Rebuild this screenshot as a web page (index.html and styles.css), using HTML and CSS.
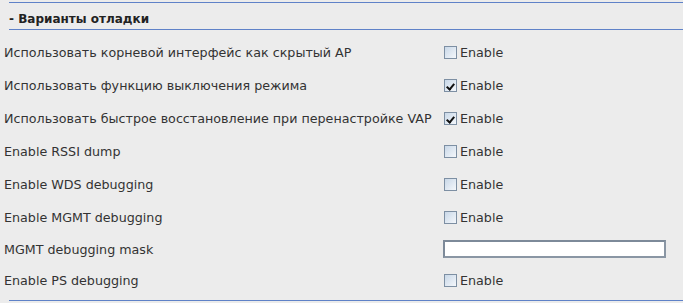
FILE: index.html
```html
<!DOCTYPE html>
<html lang="ru">
<head>
    <meta charset="UTF-8">
    <title>Варианты отладки</title>
    <link rel="stylesheet" href="styles.css">
</head>
<body>
    <div class="top-rule"></div>
    <h3 class="section-title">- Варианты отладки</h3>

    <div class="options">
        <div class="row">
            <div class="label">Использовать корневой интерфейс как скрытый AP</div>
            <label class="check"><span class="box"></span>Enable</label>
        </div>
        <div class="row">
            <div class="label">Использовать функцию выключения режима</div>
            <label class="check"><span class="box checked"></span>Enable</label>
        </div>
        <div class="row">
            <div class="label">Использовать быстрое восстановление при перенастройке VAP</div>
            <label class="check"><span class="box checked"></span>Enable</label>
        </div>
        <div class="row">
            <div class="label">Enable RSSI dump</div>
            <label class="check"><span class="box"></span>Enable</label>
        </div>
        <div class="row">
            <div class="label">Enable WDS debugging</div>
            <label class="check"><span class="box"></span>Enable</label>
        </div>
        <div class="row">
            <div class="label">Enable MGMT debugging</div>
            <label class="check"><span class="box"></span>Enable</label>
        </div>
        <div class="row row-input">
            <div class="label">MGMT debugging mask</div>
            <input type="text" class="text-field">
        </div>
        <div class="row row-last">
            <div class="label">Enable PS debugging</div>
            <label class="check"><span class="box"></span>Enable</label>
        </div>
    </div>

    <div class="bottom-rule"></div>
</body>
</html>
```

FILE: styles.css
```css
/* Basic styling */
body {
    margin: 0;
    padding: 0;
    background-color: #ececec;
    font-family: "DejaVu Sans", Verdana, sans-serif;
    font-size: 12.7px;
    color: #333;
}

.top-rule {
    margin: 2px 0 0 9px;
    border-top: 1px solid #5f82c8;
}

.section-title {
    margin: 0 0 0 9px;
    height: 26px;
    line-height: 32px;
    font-size: 12px;
    font-weight: bold;
    color: #222;
    border-bottom: 1px solid #5f82c8;
    box-sizing: content-box;
}

.options {
    padding: 6px 0 0 4px;
}

.row {
    display: flex;
    align-items: center;
    height: 33px;
}

.row-input {
    height: 30px;
}

.row-last {
    height: 32px;
}

.label {
    width: 440px;
    flex-shrink: 0;
}

.check {
    display: flex;
    align-items: center;
    gap: 3px;
}

.box {
    width: 11px;
    height: 11px;
    border: 1px solid #7d8fa3;
    background: linear-gradient(135deg, #c9d8e8, #f4f7fb);
    position: relative;
}

.box.checked::after {
    content: "";
    position: absolute;
    left: 3px;
    top: 2px;
    width: 3px;
    height: 6px;
    border-right: 2px solid #111;
    border-bottom: 2px solid #111;
    transform: rotate(40deg);
}

.text-field {
    width: 223px;
    height: 18px;
    box-sizing: border-box;
    margin: 0 0 0 -1px;
    border: 2px solid #7d8a99;
    border-right-color: #8a96a4;
    border-bottom-color: #8a96a4;
    background: #fff;
    padding: 0 3px;
}

.bottom-rule {
    margin: 4px 0 0 9px;
    border-top: 1px solid #5f82c8;
}
```
